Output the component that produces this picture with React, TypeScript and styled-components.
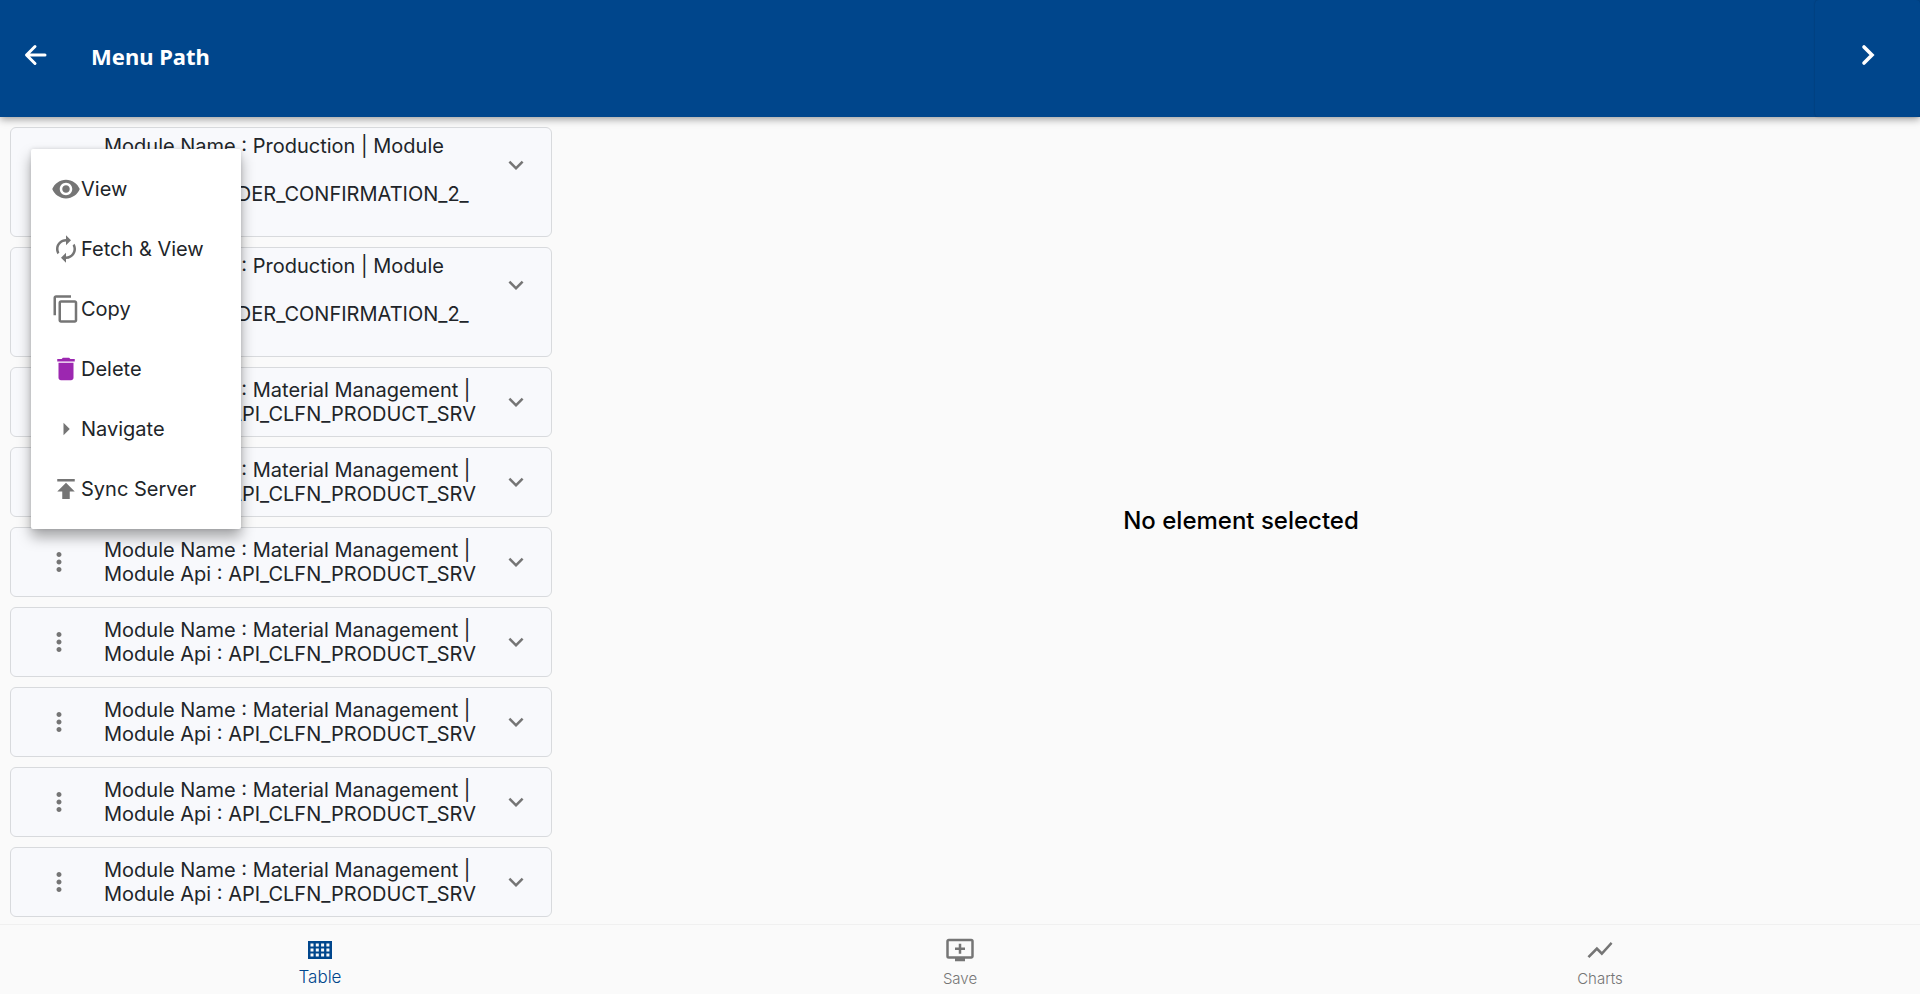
import React from 'react';
import styled, { createGlobalStyle } from 'styled-components';
import {
  MdAddToQueue,
  MdArrowRight,
  MdAutorenew,
  MdContentCopy,
  MdDelete,
  MdExpandMore,
  MdMoreVert,
  MdPublish,
  MdShowChart,
  MdVisibility,
} from 'react-icons/md';

const GlobalStyle = createGlobalStyle`
  *, *::before, *::after { box-sizing: border-box; }
  body {
    margin: 0;
    background: #fafafa;
    color: #212529;
    font-family: Inter, "Noto Sans", sans-serif;
    font-size: 20px;
    font-weight: 400;
    line-height: 24px;
  }
  button {
    border: 0;
    padding: 0;
    background: none;
    color: inherit;
    font: inherit;
    cursor: pointer;
  }
`;

const Screen = styled.div`
  display: flex;
  flex-direction: column;
  height: 100vh;
`;

const Header = styled.header`
  position: relative;
  z-index: 1;
  display: flex;
  align-items: stretch;
  flex: none;
  height: 117px;
  background: #00468c;
  color: #fff;
  box-shadow: 0 2px 8px rgba(0, 0, 0, 0.4);
`;

const HeaderButton = styled.button<{ $width: number; $raised?: boolean }>`
  display: flex;
  align-items: center;
  justify-content: center;
  width: ${(p) => p.$width}px;
  padding-bottom: 7px;
  border-radius: 4px;
  box-shadow: ${(p) => (p.$raised ? '0 0 2px rgba(0, 0, 0, 0.25)' : 'none')};
`;

const Title = styled.h1`
  flex: 1;
  align-self: center;
  margin: 0;
  padding: 0 0 6px 20px;
  font: 700 22px/30px "Noto Sans", sans-serif;
`;

const Body = styled.main`
  flex: 1;
  min-height: 0;
  display: grid;
  grid-template-columns: minmax(320px, 562px) 1fr;
`;

const List = styled.ul`
  display: flex;
  flex-direction: column;
  gap: 10px;
  margin: 0;
  padding: 10px 10px 8px;
  list-style: none;
`;

const Card = styled.li<{ $tall?: boolean }>`
  position: relative;
  display: grid;
  grid-template-columns: 93px 1fr 70px;
  align-items: ${(p) => (p.$tall ? 'start' : 'center')};
  flex: none;
  min-height: ${(p) => (p.$tall ? 110 : 70)}px;
  padding: ${(p) => (p.$tall ? '6px' : '0')} 0;
  background: #f8f9fc;
  border: 1px solid #d8dadd;
  border-radius: 6px;
`;

const CardText = styled.p`
  margin: 0;
  white-space: pre-line;
`;

const CardButton = styled.button<{ $tall?: boolean }>`
  display: flex;
  justify-self: center;
  margin-top: ${(p) => (p.$tall ? 16 : 0)}px;
  color: #757575;
  font-size: 30px;
`;

const KebabButton = styled(CardButton)`
  margin-left: 2px;
`;

const Menu = styled.div`
  position: absolute;
  z-index: 2;
  top: 21px;
  left: 20px;
  width: 210px;
  padding: 10px 0;
  background: #fff;
  border-radius: 2px;
  box-shadow: 0 8px 14px rgba(0, 0, 0, 0.34), 0 0 4px rgba(0, 0, 0, 0.12);
`;

const MenuItem = styled.button<{ $color?: string }>`
  display: flex;
  align-items: center;
  width: 100%;
  height: 60px;
  padding: 0 20px;
  white-space: nowrap;

  svg {
    flex: none;
    width: 30px;
    height: 30px;
    color: ${(p) => p.$color ?? '#757575'};
  }
`;

const Detail = styled.section`
  display: flex;
  align-items: center;
  justify-content: center;
`;

const EmptyMessage = styled.h2`
  margin: 0;
  color: #000;
  font-size: 24px;
  font-weight: 500;
  line-height: 30px;
`;

const BottomNav = styled.nav`
  display: grid;
  grid-template-columns: repeat(3, 1fr);
  flex: none;
  height: 70px;
  background: #fafafa;
  border-top: 1px solid #f0f0f0;
`;

const NavButton = styled.button<{ $active?: boolean }>`
  display: flex;
  flex-direction: column;
  align-items: center;
  gap: ${(p) => (p.$active ? 0 : 2)}px;
  padding-top: 10px;
  color: ${(p) => (p.$active ? '#00468c' : '#757575')};
  font-size: ${(p) => (p.$active ? 17 : 15)}px;
  font-weight: 300;

  svg {
    width: 30px;
    height: 30px;
  }
`;

const BackArrow = () => (
  <svg width="24" height="24" viewBox="0 0 24 24" fill="none" stroke="#fff" strokeWidth="3" strokeLinecap="round" strokeLinejoin="round" aria-hidden="true">
    <path d="M11 3.500 2.500 12l8.500 8.500M3 12H21" />
  </svg>
);

const NextChevron = () => (
  <svg width="24" height="24" viewBox="0 0 24 24" fill="none" stroke="#fff" strokeWidth="3.600" strokeLinecap="round" aria-hidden="true">
    <path d="M8 4l8 8-8 8" />
  </svg>
);

const cells = [0, 1, 2, 3].flatMap((c) => [0, 1, 2].map((r) => ({ x: 5.5 + c * 5.3, y: 8.500 + r * 5 })));

const GridIcon = () => (
  <svg viewBox="0 0 30 30" aria-hidden="true">
    <rect x="3" y="6" width="24" height="18" fill="#00468c" />
    {cells.map((c) => (
      <rect key={`${c.x}-${c.y}`} x={c.x} y={c.y} width="3" height="3" fill="#fafafa" />
    ))}
  </svg>
);

const menuItems = [
  { label: 'View', Icon: MdVisibility },
  { label: 'Fetch & View', Icon: MdAutorenew },
  { label: 'Copy', Icon: MdContentCopy },
  { label: 'Delete', Icon: MdDelete, color: '#9c27b0' },
  { label: 'Navigate', Icon: MdArrowRight },
  { label: 'Sync Server', Icon: MdPublish },
];

const production = {
  text: 'Module Name : Production | Module\nApi :\nAPI_PROD_ORDER_CONFIRMATION_2_\nSRV',
  tall: true,
};
const material = {
  text: 'Module Name : Material Management |\nModule Api : API_CLFN_PRODUCT_SRV',
  tall: false,
};
const modules = [production, production, ...Array(7).fill(material)];

export default function App() {
  return (
    <Screen>
      <GlobalStyle />
      <Header>
        <HeaderButton $width={71} aria-label="Back">
          <BackArrow />
        </HeaderButton>
        <Title>Menu Path</Title>
        <HeaderButton $width={105} $raised aria-label="Next">
          <NextChevron />
        </HeaderButton>
      </Header>
      <Body>
        <List>
          {modules.map((m, i) => (
            <Card key={i} $tall={m.tall}>
              <KebabButton $tall={m.tall} aria-label="More actions">
                <MdMoreVert />
              </KebabButton>
              <CardText>{m.text}</CardText>
              <CardButton $tall={m.tall} aria-label="Expand">
                <MdExpandMore />
              </CardButton>
              {i === 0 && (
                <Menu role="menu">
                  {menuItems.map(({ label, Icon, color }) => (
                    <MenuItem key={label} role="menuitem" $color={color}>
                      <Icon />
                      {label}
                    </MenuItem>
                  ))}
                </Menu>
              )}
            </Card>
          ))}
        </List>
        <Detail>
          <EmptyMessage>No element selected</EmptyMessage>
        </Detail>
      </Body>
      <BottomNav>
        <NavButton $active>
          <GridIcon />
          Table
        </NavButton>
        <NavButton>
          <MdAddToQueue />
          Save
        </NavButton>
        <NavButton>
          <MdShowChart />
          Charts
        </NavButton>
      </BottomNav>
    </Screen>
  );
}
